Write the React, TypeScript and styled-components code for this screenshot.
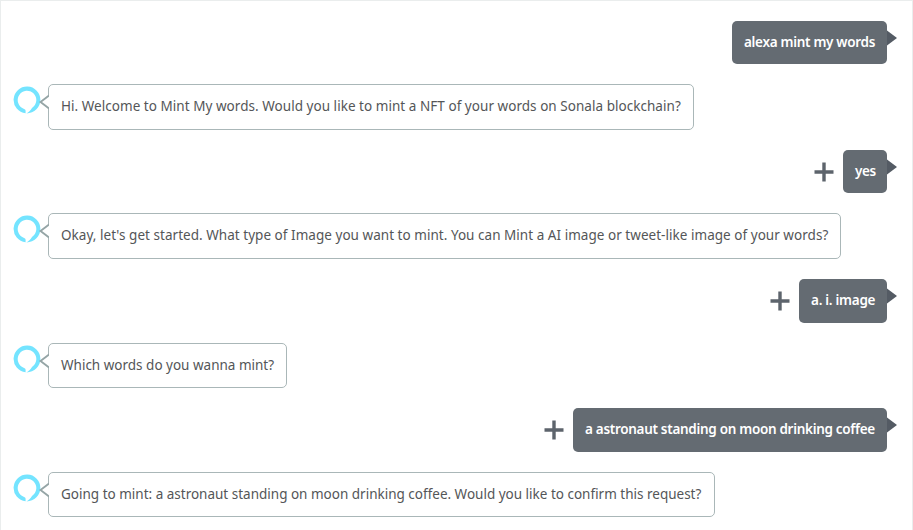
import React from "react";
import styled, { createGlobalStyle } from "styled-components";

const Global = createGlobalStyle`
  * { box-sizing: border-box; }
  body { margin: 0; background: #fff; }
`;

const Panel = styled.main`
  width: 913px;
  height: 530px;
  overflow: hidden;
  padding: 20px 25px 0 12px;
  border: solid #eaeded;
  border-width: 1px 1px 0;
  font-family: "Noto Sans", sans-serif;
  font-size: 13.5px;
  line-height: 20px;
  display: flex;
  flex-direction: column;
  gap: 20px;
`;

const UserRow = styled.div<{ $height: number }>`
  display: flex;
  flex: none;
  justify-content: flex-end;
  align-items: center;
  gap: 9px;
  height: ${(p) => p.$height}px;
`;

const ReplyRow = styled.div<{ $height: number }>`
  display: flex;
  flex: none;
  gap: 7px;
  height: ${(p) => p.$height}px;
`;

const Bubble = styled.div<{ $width: number; $spacing: number }>`
  position: relative;
  width: ${(p) => p.$width}px;
  height: 100%;
  padding: 11px 0 0 12px;
  border-radius: 5px;
  letter-spacing: ${(p) => p.$spacing}px;
  white-space: nowrap;
`;

const UserBubble = styled(Bubble)`
  background: #646b72;
  color: #fff;
  font-weight: 600;
`;

const ReplyBubble = styled(Bubble)`
  border: 1px solid #aab7b8;
  color: #545658;
`;

const UserTail = styled.svg`
  position: absolute;
  left: 100%;
  top: 9px;
`;

const ReplyTail = styled.svg`
  position: absolute;
  left: -10px;
  top: 9px;
`;

const Avatar = styled.svg`
  flex: none;
  margin-top: 2px;
`;

function AlexaRing() {
  return (
    <Avatar width="28" height="28" viewBox="0 0 28 28">
      <path
        d="M12.6 27.3A13.4 13.4 0 1 1 27.4 14C27.4 21 21.5 27.2 13.4 27.4C15.4 26.2 17.6 24.6 19 21.9A9.3 9.3 0 1 0 10.6 22.7C12 23.2 12.6 23.7 12.6 24.8Z"
        fill="#74e4ff"
      />
    </Avatar>
  );
}

function Plus() {
  return (
    <svg width="20" height="20" viewBox="0 0 20 20">
      <path d="M10 0.5V19.5M0.5 10H19.5" stroke="#5d646c" strokeWidth="3.4" fill="none" />
    </svg>
  );
}

interface Message {
  from: "user" | "alexa";
  text: string;
  width: number;
  height: number;
  spacing: number;
  plus?: boolean;
}

const messages: Message[] = [
  { from: "user", text: "alexa mint my words", width: 155, height: 43, spacing: -0.3 },
  { from: "alexa", text: "Hi. Welcome to Mint My words. Would you like to mint a NFT of your words on Sonala blockchain?", width: 646, height: 46, spacing: 0.04 },
  { from: "user", text: "yes", width: 44, height: 43, spacing: -0.4, plus: true },
  { from: "alexa", text: "Okay, let's get started. What type of Image you want to mint. You can Mint a AI image or tweet-like image of your words?", width: 793, height: 46, spacing: 0.035 },
  { from: "user", text: "a. i. image", width: 88, height: 44, spacing: -0.27, plus: true },
  { from: "alexa", text: "Which words do you wanna mint?", width: 239, height: 45, spacing: 0 },
  { from: "user", text: "a astronaut standing on moon drinking coffee", width: 314, height: 44, spacing: -0.3, plus: true },
  { from: "alexa", text: "Going to mint: a astronaut standing on moon drinking coffee. Would you like to confirm this request?", width: 667, height: 45, spacing: 0 },
];

export default function App() {
  return (
    <>
      <Global />
      <Panel>
        {messages.map((m) =>
          m.from === "user" ? (
            <UserRow key={m.text} $height={m.height}>
              {m.plus && <Plus />}
              <UserBubble $width={m.width} $spacing={m.spacing}>
                {m.text}
                <UserTail width="10" height="16" viewBox="0 0 10 16">
                  <path d="M0 0.5L10 8L0 15.5Z" fill="#545b64" />
                </UserTail>
              </UserBubble>
            </UserRow>
          ) : (
            <ReplyRow key={m.text} $height={m.height}>
              <AlexaRing />
              <ReplyBubble $width={m.width} $spacing={m.spacing}>
                <ReplyTail width="10" height="16" viewBox="0 0 10 16">
                  <path d="M10 1.5L1.5 8L10 14.5Z" fill="#fff" />
                  <path d="M10 1.5L1.5 8L10 14.5" fill="none" stroke="#95a5a6" strokeWidth="1.8" />
                </ReplyTail>
                {m.text}
              </ReplyBubble>
            </ReplyRow>
          ),
        )}
      </Panel>
    </>
  );
}
